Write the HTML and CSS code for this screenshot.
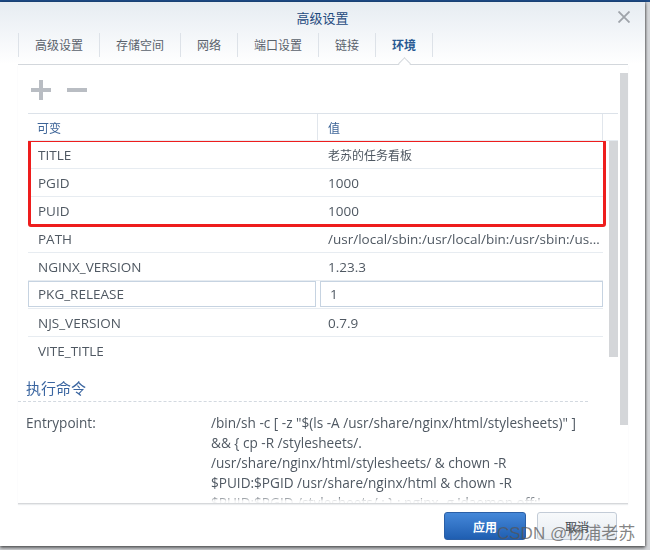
FILE: index.html
```html
<!DOCTYPE html>
<html lang="zh-CN">
<head>
<meta charset="utf-8">
<title>高级设置</title>
<link rel="stylesheet" href="styles.css">
</head>
<body>
<div class="dialog">
  <div class="header">
    <div class="title">高级设置</div>
    <span class="close"><svg width="12" height="12" viewBox="0 0 12 12"><path d="M0.5 0.5L11.5 11.5M11.5 0.5L0.5 11.5" stroke="#9ea3a9" stroke-width="1.8" fill="none"/></svg></span>
  </div>
  <div class="tabs">
    <div class="tab">高级设置</div>
    <div class="tab">存储空间</div>
    <div class="tab">网络</div>
    <div class="tab">端口设置</div>
    <div class="tab">链接</div>
    <div class="tab active">环境</div>
  </div>
  <div class="content">
    <div class="main">
      <div class="toolbar">
        <svg width="20" height="20" viewBox="0 0 20 20"><path d="M10 0V20M0 10H20" stroke="#b9bdc3" stroke-width="4" fill="none"/></svg>
        <svg width="20" height="20" viewBox="0 0 20 20"><path d="M0 10H20" stroke="#b9bdc3" stroke-width="4" fill="none"/></svg>
      </div>
      <div class="grid">
        <div class="grid-head">
          <div class="hc c1">可变</div>
          <div class="hc c2">值</div>
          <div class="hc c3"></div>
        </div>
        <div class="grid-body">
          <div class="rows">
            <div class="marked">
              <div class="row"><div class="cell c1">TITLE</div><div class="cell c2 cjk">老苏的任务看板</div></div>
              <div class="row"><div class="cell c1">PGID</div><div class="cell c2">1000</div></div>
              <div class="row"><div class="cell c1">PUID</div><div class="cell c2">1000</div></div>
            </div>
            <div class="row"><div class="cell c1">PATH</div><div class="cell c2"><span class="ell">/usr/local/sbin:/usr/local/bin:/usr/sbin:/usr/bin:/sbin:/bin</span></div></div>
            <div class="row"><div class="cell c1">NGINX_VERSION</div><div class="cell c2">1.23.3</div></div>
            <div class="row edit"><div class="cell c1"><div class="box b1">PKG_RELEASE</div></div><div class="cell c2"><div class="box b2">1</div></div></div>
            <div class="row"><div class="cell c1">NJS_VERSION</div><div class="cell c2">0.7.9</div></div>
            <div class="row"><div class="cell c1">VITE_TITLE</div><div class="cell c2"></div></div>
          </div>
          <div class="iscroll"></div>
        </div>
      </div>
      <div class="section">执行命令</div>
      <div class="cmd">
        <div class="label">Entrypoint:</div>
        <div class="value">
          <div class="line">/bin/sh -c [ -z "$(ls -A /usr/share/nginx/html/stylesheets)" ]</div>
          <div class="line">&amp;&amp; { cp -R /stylesheets/.</div>
          <div class="line">/usr/share/nginx/html/stylesheets/ &amp; chown -R</div>
          <div class="line">$PUID:$PGID /usr/share/nginx/html &amp; chown -R</div>
          <div class="line">$PUID:$PGID /stylesheets/ ; } ; nginx -g 'daemon off;'</div>
        </div>
      </div>
    </div>
    <div class="vscroll"></div>
  </div>
  <div class="footer">
    <div class="btn apply">应用</div>
    <div class="btn cancel">取消</div>
  </div>
  <div class="watermark">CSDN @杨浦老苏</div>
</div>
</body>
</html>
```
FILE: styles.css
```css
* { box-sizing: border-box; }

body {
  margin: 0;
  width: 650px;
  height: 550px;
  overflow: hidden;
  background: linear-gradient(#1d4a86 0, #1d4a86 2px, #d3d5d8 2px);
  font-family: "Open Sans", "Noto Sans CJK SC", sans-serif;
}

.dialog {
  position: relative;
  width: 645px;
  height: 544px;
  margin-top: 2px;
  background: linear-gradient(#e6ecf2 0, #ffffff 62px);
  box-shadow: 0 2px 3px rgba(0, 0, 0, 0.55), 1px 0 2px rgba(0, 0, 0, 0.3);
  display: flex;
  flex-direction: column;
}

.header {
  height: 30px;
  display: grid;
  grid-template-columns: 1fr auto 1fr;
  align-items: center;
}

.title {
  grid-column: 2;
  font-family: "Noto Sans CJK SC", sans-serif;
  font-size: 13px;
  color: #1f4b7e;
}

.close {
  grid-column: 3;
  justify-self: end;
  margin-right: 15px;
  display: flex;
}

.tabs {
  display: flex;
  height: 32px;
  margin: 1px 17px 0 18px;
  border-bottom: 1px solid #d3d7dc;
}

.tab {
  position: relative;
  height: 24px;
  padding: 0 16px;
  border-left: 1px solid #dde2e8;
  font-family: "Noto Sans CJK SC", sans-serif;
  font-size: 12px;
  line-height: 24px;
  color: #5a626c;
}

.tab:last-child {
  border-right: 1px solid #dde2e8;
}

.tab.active {
  color: #2a5a93;
  font-weight: bold;
}

.tab.active::after {
  content: "";
  position: absolute;
  left: 50%;
  bottom: -11px;
  width: 8px;
  height: 8px;
  margin-left: -4px;
  background: #fff;
  border-left: 1px solid #d3d7dc;
  border-top: 1px solid #d3d7dc;
  transform: rotate(45deg);
}

.content {
  display: flex;
  height: 439px;
  margin: 0 17px 0 18px;
  overflow: hidden;
  border-bottom: 1px solid #d6d8db;
  box-shadow: 0 1px 1px #eceeef;
}

.main {
  width: 602px;
  overflow: hidden;
  -webkit-mask-image: linear-gradient(to bottom, #000 0, #000 431px, rgba(0, 0, 0, 0.08) 436px);
  mask-image: linear-gradient(to bottom, #000 0, #000 431px, rgba(0, 0, 0, 0.08) 436px);
}

.vscroll {
  width: 8px;
  height: 352px;
  margin-top: 8px;
  background: #d4d6d9;
}

.toolbar {
  display: flex;
  gap: 16px;
  height: 35px;
  padding: 15px 0 0 13px;
  margin-bottom: 13px;
}

.grid {
  margin-left: 10px;
  width: 590px;
}

.grid-head {
  display: flex;
  height: 28px;
  border-top: 1px solid #dce2e9;
  border-bottom: 1px solid #e6ebf0;
  font-family: "Noto Sans CJK SC", sans-serif;
  font-size: 12px;
  color: #3d6497;
}

.hc {
  display: flex;
  align-items: center;
}

.hc.c1 { width: 290px; padding-left: 9px; border-right: 1px solid #e1e6ec; }
.hc.c2 { width: 285px; padding-left: 10px; border-right: 1px solid #e1e6ec; }
.hc.c3 { flex: 1; }

.grid-body {
  display: flex;
  align-items: flex-start;
  height: 218px;
  overflow: hidden;
}

.rows {
  width: 575px;
}

.marked {
  position: relative;
}

.marked::after {
  content: "";
  position: absolute;
  top: -2px;
  bottom: -2px;
  left: 0;
  right: -3px;
  border: 3px solid #ee1d1d;
  border-radius: 3px;
}

.row {
  display: flex;
  height: 28px;
  border-bottom: 1px solid #e7ecf1;
  font-size: 13.5px;
  color: #4f5862;
}

.cell {
  display: flex;
  align-items: center;
  white-space: nowrap;
  overflow: hidden;
}

.cell.c1 { width: 290px; padding-left: 10px; }
.cell.c2 { width: 285px; padding-left: 10px; }

.cell.cjk {
  font-family: "Noto Sans CJK SC", sans-serif;
  font-size: 12px;
}

.ell {
  display: block;
  overflow: hidden;
  text-overflow: ellipsis;
  max-width: 275px;
}

.row.edit .cell {
  padding-left: 0;
  align-items: flex-start;
  overflow: visible;
}

.box {
  height: 26px;
  display: flex;
  align-items: center;
  padding-left: 9px;
  border: 1px solid #c6d3e1;
  background: #fff;
}

.box.b1 { width: 288px; }
.box.b2 { width: 286px; margin-left: 2px; }

.iscroll {
  width: 9px;
  height: 216px;
  margin-left: 6px;
  background: #d4d6d9;
}

.section {
  width: 570px;
  margin-top: 19px;
  padding: 0 0 3px 8px;
  line-height: 20px;
  font-family: "Noto Sans CJK SC", sans-serif;
  font-size: 15px;
  color: #3a65a0;
  border-bottom: 1px dashed #d3d9e0;
}

.cmd {
  display: flex;
  margin-top: 11px;
  font-size: 13.6px;
  line-height: 20px;
  color: #4f5862;
}

.label {
  width: 193px;
  padding-left: 8px;
}

.line {
  white-space: nowrap;
}

.footer {
  display: flex;
  justify-content: flex-end;
  gap: 11px;
  padding: 8px 28px 0 0;
}

.btn {
  height: 28px;
  border-radius: 3px;
  display: flex;
  align-items: center;
  justify-content: center;
  font-family: "Noto Sans CJK SC", sans-serif;
  font-size: 12px;
}

.apply {
  width: 82px;
  background: linear-gradient(#4588d9, #1f5eb1);
  border: 1px solid #2a5fa6;
  color: #fff;
  font-weight: bold;
}

.cancel {
  width: 80px;
  background: linear-gradient(#f7f9fb, #e7ecf2);
  border: 1px solid #c3ccd7;
  color: #444b53;
}

.watermark {
  position: absolute;
  left: 497px;
  top: 517px;
  font-family: "Liberation Sans", "Noto Sans CJK SC", sans-serif;
  font-size: 17px;
  color: rgba(85, 85, 85, 0.72);
  white-space: nowrap;
}
```
